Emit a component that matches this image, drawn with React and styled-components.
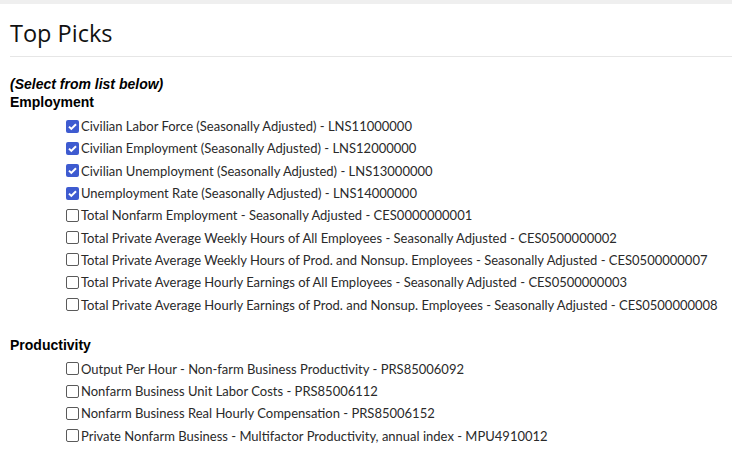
import React from "react";
import styled, { createGlobalStyle } from "styled-components";

const GlobalStyle = createGlobalStyle`
  html, body {
    margin: 0;
    padding: 0;
    background: #fff;
  }
`;

const groups = [
  {
    title: "Employment",
    items: [
      { label: "Civilian Labor Force (Seasonally Adjusted) - LNS11000000", checked: true },
      { label: "Civilian Employment (Seasonally Adjusted) - LNS12000000", checked: true },
      { label: "Civilian Unemployment (Seasonally Adjusted) - LNS13000000", checked: true },
      { label: "Unemployment Rate (Seasonally Adjusted) - LNS14000000", checked: true },
      { label: "Total Nonfarm Employment - Seasonally Adjusted - CES0000000001" },
      { label: "Total Private Average Weekly Hours of All Employees - Seasonally Adjusted - CES0500000002" },
      { label: "Total Private Average Weekly Hours of Prod. and Nonsup. Employees - Seasonally Adjusted - CES0500000007" },
      { label: "Total Private Average Hourly Earnings of All Employees - Seasonally Adjusted - CES0500000003" },
      { label: "Total Private Average Hourly Earnings of Prod. and Nonsup. Employees - Seasonally Adjusted - CES0500000008" },
    ],
  },
  {
    title: "Productivity",
    items: [
      { label: "Output Per Hour - Non-farm Business Productivity - PRS85006092" },
      { label: "Nonfarm Business Unit Labor Costs - PRS85006112" },
      { label: "Nonfarm Business Real Hourly Compensation - PRS85006152" },
      { label: "Private Nonfarm Business - Multifactor Productivity, annual index - MPU4910012" },
    ],
  },
];

export default function App() {
  return (
    <>
      <GlobalStyle />
      <TopBar />
      <Page>
        <Title>Top Picks</Title>
        <Rule />
        <Hint>(Select from list below)</Hint>
        {groups.map((group, gi) => (
          <Group key={group.title} $first={gi === 0}>
            <GroupTitle>{group.title}</GroupTitle>
            <List>
              {group.items.map((item) => (
                <Row key={item.label}>
                  <Box $checked={item.checked}>
                    {item.checked && (
                      <svg width="13" height="13" viewBox="0 0 13 13">
                        <path d="M3 6.6 L5.3 8.9 L10 4.2" fill="none" stroke="#fff" strokeWidth="2" />
                      </svg>
                    )}
                  </Box>
                  <Label>{item.label}</Label>
                </Row>
              ))}
            </List>
          </Group>
        ))}
      </Page>
    </>
  );
}

const TopBar = styled.div`
  height: 4px;
  background: #efefef;
`;

const Page = styled.div`
  padding: 0 0 0 10px;
`;

const Title = styled.h1`
  margin: 0;
  padding-top: 10px;
  height: 42px;
  font-family: "Open Sans", sans-serif;
  font-weight: 400;
  font-size: 23.5px;
  line-height: 38px;
  color: #111;
`;

const Rule = styled.div`
  height: 1px;
  background: #e6e6e6;
`;

const Hint = styled.div`
  margin-top: 19px;
  font-family: "Liberation Sans", Arial, sans-serif;
  font-weight: 700;
  font-style: italic;
  font-size: 14px;
  line-height: 17px;
  color: #000;
`;

const Group = styled.section`
  margin-top: ${({ $first }) => ($first ? "0" : "20px")};
`;

const GroupTitle = styled.div`
  font-family: "Liberation Sans", Arial, sans-serif;
  font-weight: 700;
  font-size: 14px;
  line-height: 18px;
  color: #000;
`;

const List = styled.div`
  display: flex;
  flex-direction: column;
  padding-left: 56px;
  padding-top: 4px;
`;

const Row = styled.div`
  display: flex;
  align-items: center;
  height: 22.3px;
  gap: 2px;
`;

const Box = styled.span`
  width: 13px;
  height: 13px;
  box-sizing: border-box;
  border-radius: 2px;
  flex: none;
  display: flex;
  align-items: center;
  justify-content: center;
  background: ${({ $checked }) => ($checked ? "#3e5bd0" : "#fff")};
  border: ${({ $checked }) => ($checked ? "none" : "1px solid #5a5a5a")};
`;

const Label = styled.span`
  font-family: Lato, sans-serif;
  font-size: 13px;
  color: #2a2a2a;
  white-space: nowrap;
`;
